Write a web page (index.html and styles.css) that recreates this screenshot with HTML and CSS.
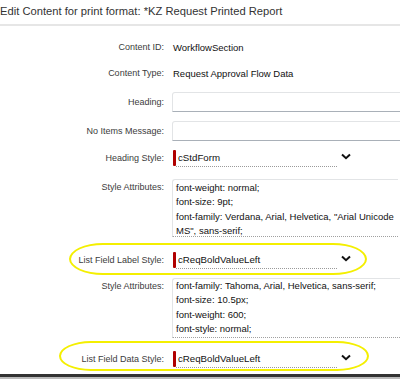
FILE: index.html
```html
<!DOCTYPE html>
<html lang="en">
<head>
    <meta charset="UTF-8">
    <title>Edit Content for print format</title>
    <link rel="stylesheet" href="styles.css">
</head>
<body>
    <div class="page">
        <h1 class="title">Edit Content for print format: *KZ Request Printed Report</h1>

        <div class="form">
            <div class="row row-id">
                <label class="lbl">Content ID:</label>
                <div class="val">WorkflowSection</div>
            </div>
            <div class="row row-type">
                <label class="lbl">Content Type:</label>
                <div class="val">Request Approval Flow Data</div>
            </div>
            <div class="row row-heading">
                <label class="lbl">Heading:</label>
                <div class="input"></div>
            </div>
            <div class="row row-noitems">
                <label class="lbl">No Items Message:</label>
                <div class="input"></div>
            </div>
            <div class="row row-hstyle">
                <label class="lbl">Heading Style:</label>
                <div class="select">
                    <span class="select-text">cStdForm</span>
                    <svg class="chev" width="10" height="7" viewBox="0 0 10 7"><path d="M1 1.5 L5 5.2 L9 1.5" fill="none" stroke="#111" stroke-width="2"/></svg>
                </div>
            </div>
            <div class="row row-attrs1 top">
                <label class="lbl">Style Attributes:</label>
                <div class="area">font-weight: normal;<br>font-size: 9pt;<br>font-family: Verdana, Arial, Helvetica, "Arial Unicode MS", sans-serif;</div>
            </div>
            <div class="row row-lstyle mark mark-1">
                <label class="lbl">List Field Label Style:</label>
                <div class="select">
                    <span class="select-text">cReqBoldValueLeft</span>
                    <svg class="chev" width="10" height="7" viewBox="0 0 10 7"><path d="M1 1.5 L5 5.2 L9 1.5" fill="none" stroke="#111" stroke-width="2"/></svg>
                </div>
            </div>
            <div class="row row-attrs2 top">
                <label class="lbl">Style Attributes:</label>
                <div class="area area-2">font-family: Tahoma, Arial, Helvetica, sans-serif;<br>font-size: 10.5px;<br>font-weight: 600;<br>font-style: normal;</div>
            </div>
            <div class="row row-dstyle mark mark-2">
                <label class="lbl">List Field Data Style:</label>
                <div class="select">
                    <span class="select-text">cReqBoldValueLeft</span>
                    <svg class="chev" width="10" height="7" viewBox="0 0 10 7"><path d="M1 1.5 L5 5.2 L9 1.5" fill="none" stroke="#111" stroke-width="2"/></svg>
                </div>
            </div>
        </div>

        <div class="bottom-edge"></div>
    </div>
</body>
</html>
```

FILE: styles.css
```css
body {
    margin: 0;
    background-color: #fff;
    font-family: "Liberation Sans", Arial, sans-serif;
    overflow: hidden;
}
.page {
    width: 400px;
    height: 379px;
    overflow: hidden;
}
.title {
    margin: 0;
    height: 24px;
    line-height: 22px;
    font-size: 11.2px;
    font-weight: normal;
    color: #333;
    white-space: nowrap;
    border-bottom: 2px solid #e6e6e6;
}
.form {
    display: flex;
    flex-direction: column;
}
.row {
    display: grid;
    grid-template-columns: 164px 240px;
    column-gap: 8px;
    align-items: center;
}
.row.top {
    align-items: start;
}
.lbl {
    text-align: right;
    font-size: 9px;
    color: #3c3c3c;
    white-space: nowrap;
}
.top .lbl {
    line-height: 14px;
    padding-top: 1px;
}
.val {
    font-size: 9.5px;
    color: #111;
    padding-left: 1px;
    white-space: nowrap;
}
.row-id { margin-top: 12px; height: 18px; }
.row-type { margin-top: 8px; height: 18px; }
.row-heading { margin-top: 10px; height: 20px; }
.row-noitems { margin-top: 9px; height: 20px; }
.row-hstyle { margin-top: 7px; height: 19px; }
.row-attrs1 { margin-top: 12px; }
.row-lstyle { margin-top: 13px; height: 19px; }
.row-attrs2 { margin-top: 9px; }
.row-dstyle { margin-top: 11px; height: 19px; }

.input {
    height: 18px;
    border: 1px solid #e2e4e6;
    border-bottom: 1px solid #a9b0b8;
    border-radius: 3px 0 0 0;
}
.select {
    display: flex;
    align-items: center;
    height: 19px;
    width: 185px;
}
.select::before {
    content: "";
    width: 3px;
    height: 16px;
    margin-left: 1px;
    border-radius: 1px;
    background-color: #b00000;
}
.select-text {
    width: 161px;
    height: 18px;
    line-height: 17px;
    padding-left: 2px;
    font-size: 9.7px;
    color: #111;
    border-bottom: 1px dotted #9a9a9a;
    box-sizing: border-box;
}
.chev {
    margin-left: 4px;
    margin-top: -2px;
}
.area {
    height: 58px;
    padding: 1px 0 0 3px;
    box-sizing: border-box;
    font-size: 9.5px;
    line-height: 14.3px;
    color: #111;
    border-left: 1px solid #e2e4e6;
    border-top: 1px solid #e2e4e6;
    border-bottom: 1px dotted #a0a0a0;
    border-radius: 3px 0 0 0;
    width: 226px;
}
.area-2 {
    height: 60px;
    padding-top: 0;
    width: 240px;
}
.mark {
    position: relative;
}
.mark::after {
    content: "";
    position: absolute;
    border: 2.5px solid #f4ef00;
    border-radius: 34px / 16px;
}
.mark-1::after {
    left: 69px;
    top: -7px;
    width: 294px;
    height: 28px;
}
.mark-2::after {
    left: 59px;
    top: -8px;
    width: 306px;
    height: 26px;
}
.bottom-edge {
    margin-top: 6px;
    height: 3px;
    background-color: #333;
    border-bottom: 2px solid #bbb;
}
```
